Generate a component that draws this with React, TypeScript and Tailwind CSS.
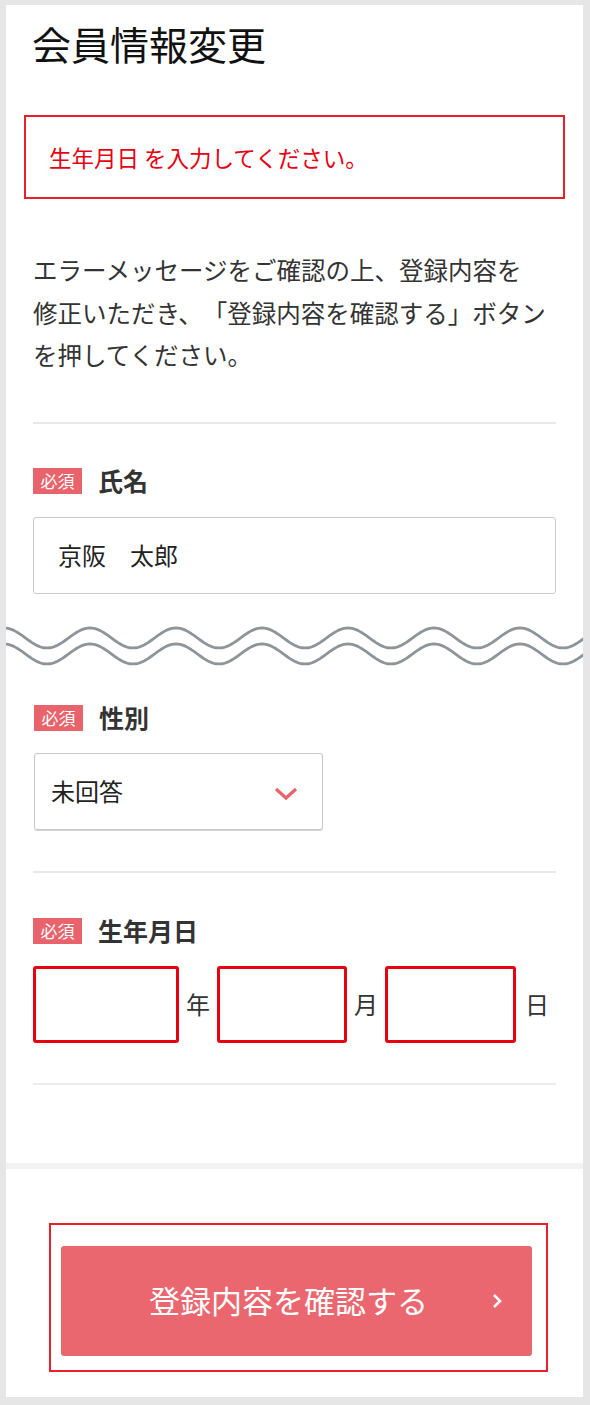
import React from 'react'

const font = { fontFamily: '"Noto Sans CJK JP", "Noto Sans", sans-serif' }

// 省略を示す波線（2本）
function wavePath(cy: number) {
  const pts: string[] = []
  for (let x = 0; x <= 578; x += 2) {
    const y = cy - 10 * Math.cos((2 * Math.PI * (x + 2)) / 86)
    pts.push(`${x === 0 ? 'M' : 'L'}${x} ${y.toFixed(2)}`)
  }
  return pts.join(' ')
}

function Wave() {
  return (
    <div className="-mx-[27px] mt-[26px] h-[50px]">
      <svg width="577" height="50" viewBox="0 0 577 50" fill="none">
        <path d={wavePath(18)} stroke="#8e959a" strokeWidth={2.8} />
        <path d={wavePath(34)} stroke="#8e959a" strokeWidth={2.8} />
      </svg>
    </div>
  )
}

function Label({ text }: { text: string }) {
  return (
    <div className="flex items-center gap-[16px]">
      <span className="flex h-[26px] w-[49px] items-center justify-center bg-[#e8636b] text-[17px] leading-none text-white">
        必須
      </span>
      <span className="text-[25px] font-bold leading-none text-[#333]">{text}</span>
    </div>
  )
}

function DateBox({ w }: { w: string }) {
  return <div className={`h-[77px] rounded-[3px] border-[3px] border-[#e60012] bg-white ${w}`}></div>
}

export default function App() {
  return (
    <div className="min-h-[1405px] bg-[#e6e6e6] pb-[7px] pl-[6px] pr-[7px] pt-[5px]" style={font}>
      <div className="bg-white">
        {/* フォーム部分 */}
        <div className="px-[27px] pt-[15px] pb-[78px]">
          <h1 className="-ml-[1px] text-[39px] font-normal leading-[46px] text-[#111]">会員情報変更</h1>

          {/* エラー表示 */}
          <div className="-mx-[9px] mt-[49px] flex h-[84px] items-center border-[2px] border-[#e8202a] pl-[23px]">
            <p className="text-[22.5px] leading-none text-[#e60012]">生年月日 を入力してください。</p>
          </div>

          <p className="mt-[50px] whitespace-nowrap text-[24.5px] leading-[42.5px] text-[#333]">
            エラーメッセージをご確認の上、登録内容を
            <br />
            修正いただき、　「登録内容を確認する」ボタン
            <br />
            を押してください。
          </p>

          <div className="mt-[45px] h-[2px] bg-[#e8e8e8]"></div>

          {/* 氏名 */}
          <div className="mt-[44px]">
            <Label text="氏名" />
          </div>
          <div className="mt-[23px] flex h-[77px] items-center rounded-[3px] border-[1.5px] border-[#cacaca] pl-[24px] text-[24px] text-[#222]">
            京阪　太郎
          </div>

          <Wave />

          {/* 性別 */}
          <div className="mt-[35px] pl-px">
            <Label text="性別" />
          </div>
          <div className="ml-px mt-[22px] flex h-[77px] w-[289px] items-center justify-between rounded-[3px] border-[1.5px] border-[#c6c6c6] pl-[16px] pr-[24px] text-[24px] text-[#222] shadow-[0_1px_0_#d5d5d5]">
            <span>未回答</span>
            <svg width="24" height="14" viewBox="0 0 24 14" fill="none" className="mt-[5px]">
              <path d="M2 2 L12 11 L22 2" stroke="#e8636b" strokeWidth={3.2} strokeLinejoin="miter" />
            </svg>
          </div>

          <div className="mt-[41px] h-[2px] bg-[#e8e8e8]"></div>

          {/* 生年月日 */}
          <div className="mt-[45px]">
            <Label text="生年月日" />
          </div>
          <div className="mt-[22px] flex items-center text-[24px] text-[#333]">
            <DateBox w="w-[146px]" />
            <span className="ml-[7px] mr-[7px]">年</span>
            <DateBox w="w-[130px]" />
            <span className="ml-[7px] mr-[7px]">月</span>
            <DateBox w="w-[131px]" />
            <span className="ml-[9px]">日</span>
          </div>

          <div className="mt-[40px] h-[2px] bg-[#ececec]"></div>
        </div>

        <div className="h-[6px] bg-[#f2f2f2]"></div>

        {/* 送信ボタン */}
        <div className="pb-[25px] pl-[43px] pr-[35px] pt-[54px]">
          <div className="border-[2.5px] border-[#e8202a] pb-[14px] pl-[10px] pr-[14px] pt-[21px]">
            <button className="relative flex h-[110px] w-full items-center justify-center rounded-[3px] bg-[#ea6770] pr-[16px] text-[31px] text-white">
              登録内容を確認する
              <svg width="10" height="16" viewBox="0 0 10 16" fill="none" className="absolute right-[30px] top-[47px]">
                <path d="M2 2 L8 8 L2 14" stroke="#fff" strokeWidth={2.5} />
              </svg>
            </button>
          </div>
        </div>
      </div>
    </div>
  )
}
